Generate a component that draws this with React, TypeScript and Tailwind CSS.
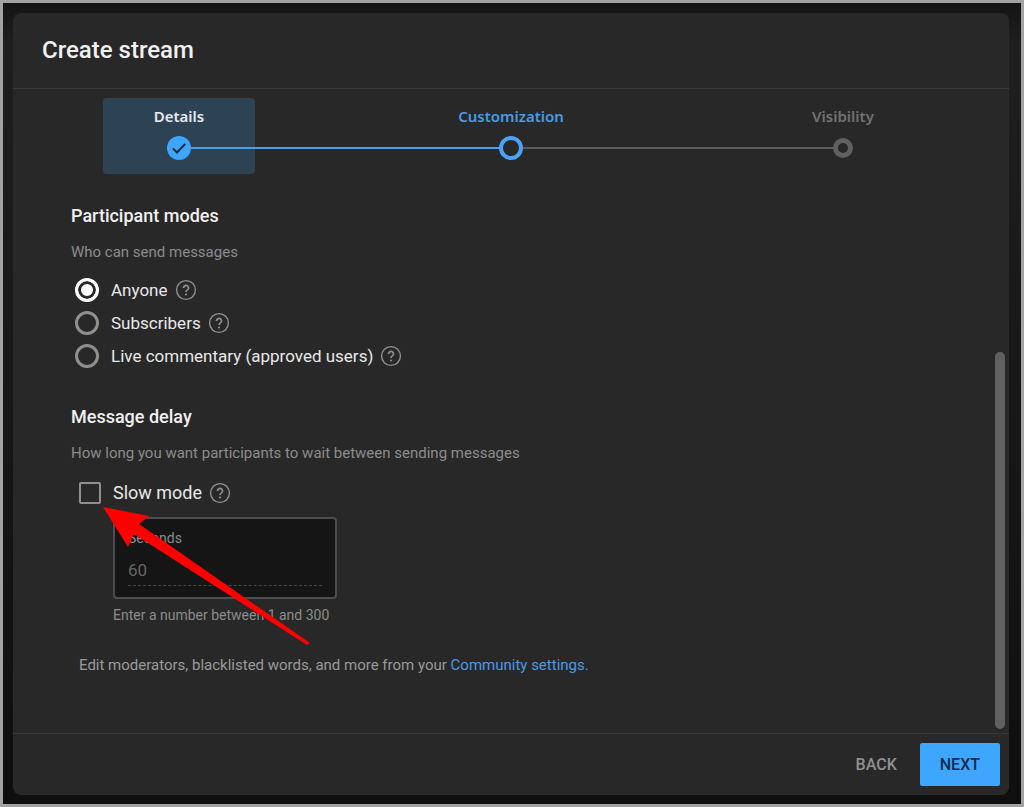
import { useState } from "react";
import type { ReactNode } from "react";

type StepState = "done" | "current" | "todo";

const steps: { label: string; state: StepState }[] = [
    { label: "Details", state: "done" },
    { label: "Customization", state: "current" },
    { label: "Visibility", state: "todo" },
];

const modes = ["Anyone", "Subscribers", "Live commentary (approved users)"];

const labelColor = {
    done: "text-[#e3eaf0]",
    current: "text-[#4a9ae4]",
    todo: "text-[#717171]",
};

function StepDot({ state }: { state: StepState }) {
    if (state === "done") {
        return (
            <span className="relative z-10 flex size-6 items-center justify-center rounded-full bg-[#3ea6ff]">
                <svg viewBox="0 0 24 24" className="size-6" fill="none" stroke="#1b2a38" strokeWidth="2">
                    <path d="M5.8 12.4l4.2 4.1 8.2-8.6" />
                </svg>
            </span>
        );
    }
    if (state === "current") {
        return <span className="relative z-10 size-6 rounded-full border-4 border-[#4aa3f5] bg-[#282828]" />;
    }
    return <span className="relative z-10 size-5 rounded-full border-5 border-[#606060] bg-[#282828]" />;
}

function Stepper() {
    return (
        <nav className="px-[90px] pt-[9px] pb-3">
            <ol className="relative flex justify-between">
                <li aria-hidden="true" className="absolute left-[76px] right-1/2 top-[49px] h-0.5 bg-[#4a9fec]" />
                <li aria-hidden="true" className="absolute left-1/2 right-[76px] top-[49px] h-0.5 bg-[#5c5c5c]" />
                {steps.map(({ label, state }) => (
                    <li key={label}>
                        <button
                            className={`flex h-19 w-38 flex-col items-center rounded pt-1.5 font-['Noto_Sans',sans-serif] text-[15px] leading-6 font-semibold ${
                                labelColor[state]
                            } ${state === "done" ? "bg-[#2d4253]" : ""}`}
                        >
                            {label}
                            <span className="mt-2 flex h-6 items-center">
                                <StepDot state={state} />
                            </span>
                        </button>
                    </li>
                ))}
            </ol>
        </nav>
    );
}

function HelpButton({ topic }: { topic: string }) {
    return (
        <button aria-label={`Help: ${topic}`} className="text-[#909090]">
            <svg viewBox="0 0 24 24" className="size-6" fill="currentColor">
                <path d="M15.36 9.96c0 1.09-.67 1.67-1.31 2.24-.53.47-1.03.9-1.16 1.6l-.04.2h-1.7l.03-.28c.14-1.17.8-1.76 1.47-2.27.52-.4 1.01-.77 1.01-1.49 0-.51-.23-.97-.63-1.29-.4-.31-.92-.42-1.42-.29-.59.15-1.05.67-1.19 1.34l-.1.28H8.57l.06-.42c.2-1.4 1.15-2.53 2.42-2.87 1.05-.29 2.14-.08 2.98.57.85.64 1.33 1.62 1.33 2.68zM12 17.6a1.1 1.1 0 1 0 0-2.2 1.1 1.1 0 0 0 0 2.2z" />
                <circle cx="12" cy="12" r="9.4" fill="none" stroke="currentColor" strokeWidth="1.4" />
            </svg>
        </button>
    );
}

function Section({ title, hint, children }: { title: string; hint: string; children: ReactNode }) {
    return (
        <section>
            <h2 className="text-lg leading-6 font-medium text-[#f1f1f1]">{title}</h2>
            <p className="mt-3 text-[15px] leading-6 text-[#8c8c8c]">{hint}</p>
            {children}
        </section>
    );
}

function Arrow() {
    return (
        <svg
            viewBox="0 0 208 140"
            className="pointer-events-none absolute left-8 top-[26px] z-20 w-52"
            fill="#fe0000"
            aria-hidden="true"
        >
            <path d="M0 0L46 9L36 17L207 136L204 138L31 27L25 40Z" />
        </svg>
    );
}

export default function App() {
    const [mode, setMode] = useState(modes[0]);
    const [slow, setSlow] = useState(false);
    const [seconds, setSeconds] = useState("60");

    return (
        <div className="flex min-h-screen flex-col border-3 border-[#a3a3a3] bg-linear-to-b from-[#141414] via-[#1f1f1f] via-5% to-[#0f0f0f] pt-2.5 pr-3 pb-[9px] pl-2.5 font-[Roboto,sans-serif]">
            <main className="flex flex-1 flex-col rounded-lg bg-[#282828]">
                <header className="border-b border-[#3a3a3a] px-[29px] pt-[21px] pb-[22px]">
                    <h1 className="text-2xl leading-8 font-medium text-[#f1f1f1]">Create stream</h1>
                </header>

                <Stepper />

                <div className="flex flex-1 items-end">
                    <div className="flex-1 self-stretch pt-[18px] pb-12 pl-[58px]">
                        <Section title="Participant modes" hint="Who can send messages">
                            <div className="mt-3.5 flex flex-col gap-[9px] pl-1">
                                {modes.map((name) => (
                                    <div key={name} className="flex h-6 items-center gap-1.5">
                                        <label className="flex items-center gap-3 text-[17px] leading-6 text-[#e8e8e8]">
                                            <input
                                                type="radio"
                                                name="mode"
                                                checked={mode === name}
                                                onChange={() => setMode(name)}
                                                className="size-6 appearance-none rounded-full border-3 border-[#8f8f8f] checked:border-white checked:bg-white checked:shadow-[inset_0_0_0_3px_#282828]"
                                            />
                                            {name}
                                        </label>
                                        <HelpButton topic={name} />
                                    </div>
                                ))}
                            </div>
                        </Section>

                        <div className="mt-[37px]">
                            <Section
                                title="Message delay"
                                hint="How long you want participants to wait between sending messages"
                            >
                                <div className="relative mt-4 pl-2">
                                    <div className="flex h-6 items-center gap-1.5">
                                        <label className="flex items-center gap-3 text-lg leading-6 text-[#e8e8e8]">
                                            <input
                                                type="checkbox"
                                                checked={slow}
                                                onChange={(e) => setSlow(e.target.checked)}
                                                className="size-[22px] appearance-none rounded-xs border-2 border-[#8f8f8f] checked:bg-[#3ea6ff]"
                                            />
                                            Slow mode
                                        </label>
                                        <HelpButton topic="Slow mode" />
                                    </div>
                                    <div className="mt-3 ml-[34px] w-56">
                                        <div className="h-[82px] rounded border-2 border-[#4d4d4d] bg-[#151515] px-[13px] pt-[9px]">
                                            <label htmlFor="seconds" className="block text-sm leading-5 text-[#8c8c8c]">
                                                Seconds
                                            </label>
                                            <input
                                                id="seconds"
                                                value={seconds}
                                                disabled={!slow}
                                                onChange={(e) => setSeconds(e.target.value)}
                                                className="mt-1.5 block h-8 w-full border-b border-dashed border-[#444444] text-[17px] leading-6 text-[#666666] outline-none"
                                            />
                                        </div>
                                        <p className="mt-1.5 text-sm leading-5 whitespace-nowrap text-[#8c8c8c]">
                                            Enter a number between 1 and 300
                                        </p>
                                    </div>
                                    <Arrow />
                                </div>
                            </Section>
                        </div>

                        <p className="mt-7 pl-2 text-[15px] leading-6 text-[#9a9a9a]">
                            Edit moderators, blacklisted words, and more from your{" "}
                            <a href="#community" className="text-[#4a9ae4]">
                                Community settings.
                            </a>
                        </p>
                    </div>

                    {/* scrollbar thumb */}
                    <div className="mr-1 mb-1 h-[377px] w-2.5 rounded-full bg-[#606060]" />
                </div>

                <footer className="flex justify-end gap-[7px] border-t border-[#3a3a3a] px-[9px] py-[9px] text-base font-medium">
                    <button className="h-[43px] px-4 text-[#909090]">BACK</button>
                    <button className="h-[43px] rounded-xs bg-[#3ea6ff] px-5 text-[#0d2c4a]">NEXT</button>
                </footer>
            </main>
        </div>
    );
}
